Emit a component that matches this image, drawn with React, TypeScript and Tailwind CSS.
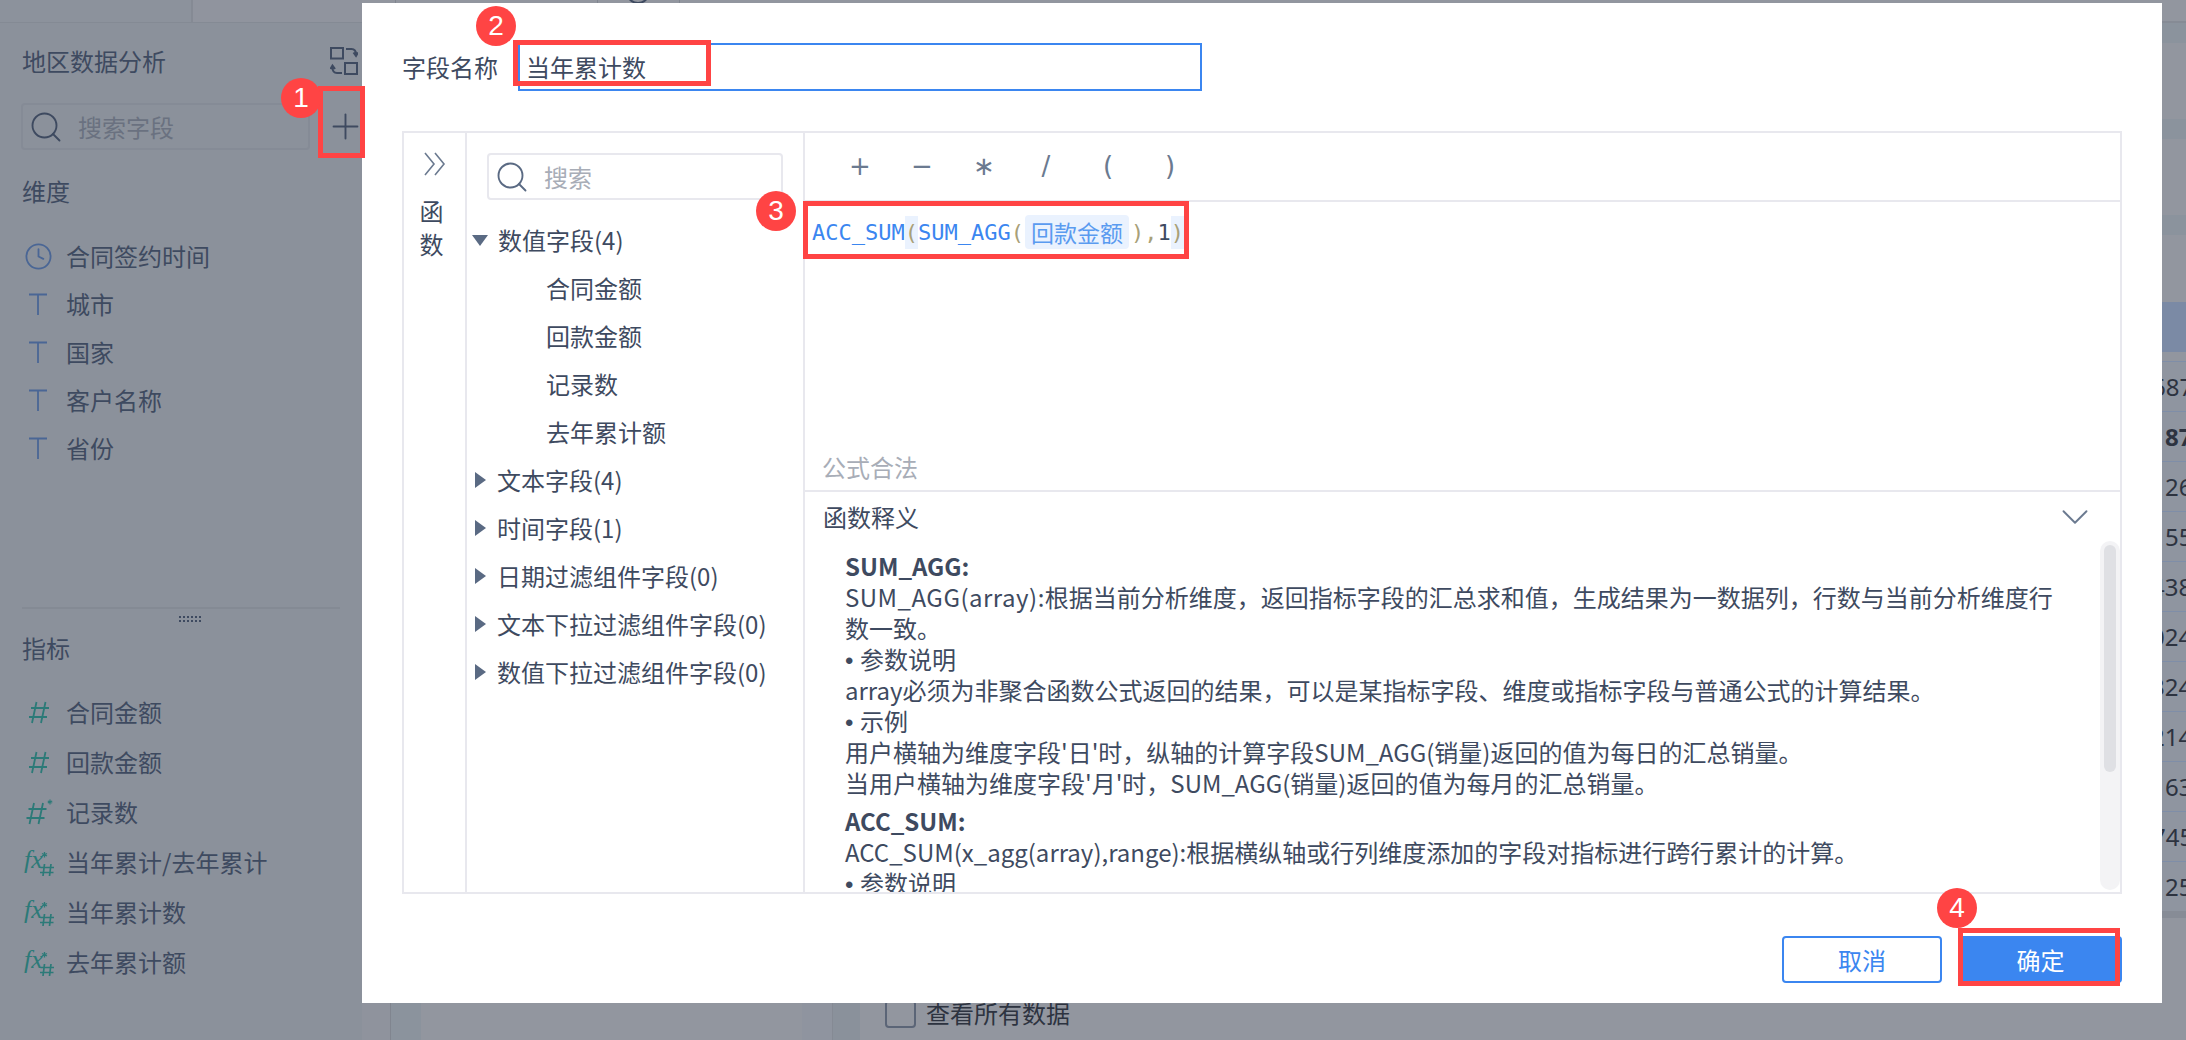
import React from "react";
import { Search, Plus, ChevronDown, Clock } from "lucide-react";

const T = () => (
  <svg width="24" height="24" viewBox="0 0 24 24" fill="none" stroke="#4a6695" strokeWidth="1.8">
    <path d="M3 2.5H21M12 2.5V23" />
  </svg>
);

const Hash = () => (
  <svg width="24" height="24" viewBox="0 0 24 24" fill="none" stroke="#2c7a78" strokeWidth="1.8">
    <path d="M9.5 2L5 23M18.5 2L14 23M4 8H22M2 17H20" />
  </svg>
);

const HashStar = () => (
  <svg width="30" height="26" viewBox="0 0 30 26" fill="none" stroke="#2c7a78" strokeWidth="1.8">
    <path d="M10 4L5.500 25M19 4L14.500 25M4.500 10H22.500M2.500 19H20.500" />
    <path d="M26 0.500V5.500M23.800 2L28.200 4M28.200 2L23.800 4" strokeWidth="1.200" />
  </svg>
);

const Fx = () => (
  <svg width="32" height="30" viewBox="0 0 32 30" fill="none" className="overflow-visible">
    <text x="1" y="21" fill="#2c7a78" fontSize="26" fontStyle="italic" fontFamily="Liberation Serif, serif">fx</text>
    <path d="M21.500 5V10.500M19 6.500L24 9M24 6.500L19 9" stroke="#2c7a78" strokeWidth="1.300" />
    <path d="M21.500 17L20 29M28 17L26.500 29M17.500 20.500H31M17 25.500H30.500" stroke="#2c7a78" strokeWidth="1.700" />
  </svg>
);

const SwapIcon = () => (
  <svg width="28" height="28" viewBox="0 0 28 28" fill="none" stroke="#3e4a60" strokeWidth="2">
    <rect x="1" y="1" width="12" height="10.500" />
    <rect x="15" y="16" width="12" height="11" />
    <path d="M16 2H21.500C24.500 2 26 4 26 7.500M23.500 5.500L26 9L28 5.500" />
    <path d="M12 26H7C4 26 2.500 24 2.500 20.500M0.500 22L2.500 18.500L5 22" />
  </svg>
);

const DoubleChevron = () => (
  <svg width="22" height="24" viewBox="0 0 22 24" fill="none" stroke="#6b7a90" strokeWidth="1.600">
    <path d="M1 1L10 12L1 23M11 1L20 12L11 23" />
  </svg>
);

const Badge = ({ n, className }: { n: string; className: string }) => (
  <div className={"absolute z-20 flex items-center justify-center rounded-full bg-[#ff4444] text-white font-['Liberation_Sans',sans-serif] text-[28px] leading-none " + className}>
    {n}
  </div>
);

const RedBox = ({ className }: { className: string }) => (
  <div className={"absolute z-10 border-[5px] border-[#ff4444] pointer-events-none " + className} />
);

const Bullet = ({ children }: { children: React.ReactNode }) => (
  <div className="h-[31px]">
    <span className="font-['Liberation_Sans',sans-serif] leading-none">• </span>
    <span className="leading-none">{children}</span>
  </div>
);

const dims = [
  { icon: <Clock size={29} color="#4a6695" strokeWidth={1.5} />, label: "合同签约时间" },
  { icon: <T />, label: "城市" },
  { icon: <T />, label: "国家" },
  { icon: <T />, label: "客户名称" },
  { icon: <T />, label: "省份" },
];

const metrics = [
  { icon: <Hash />, label: "合同金额" },
  { icon: <Hash />, label: "回款金额" },
  { icon: <HashStar />, label: "记录数" },
  { icon: <Fx />, label: "当年累计/去年累计" },
  { icon: <Fx />, label: "当年累计数" },
  { icon: <Fx />, label: "去年累计额" },
];

const LeftPanel = () => (
  <aside className="w-[362px] h-full shrink-0 bg-[#8b919b] text-[#3e4a60]">
    <div className="flex h-[23px] border-b border-[#848a94]">
      <div className="w-[193px] border-r-2 border-[#858a94] bg-[#8c929c]" />
      <div className="flex-1 bg-[#90949e]" />
    </div>
    <div className="mt-[21px] flex h-[34px] items-center justify-between pl-[22px] pr-[4px]">
      <span>地区数据分析</span>
      <SwapIcon />
    </div>
    <div className="mt-[25px] flex h-[47px] items-center pl-[21px]">
      <div className="flex h-full w-[289px] shrink-0 items-center rounded border-2 border-[#858b96] pl-[5px]">
        <Search size={36} color="#3e4a60" strokeWidth={1.25} />
        <span className="ml-[14px] text-[#6a7180]">搜索字段</span>
      </div>
      <Plus size={41} color="#3e4a60" strokeWidth={1.1} className="ml-[15px] shrink-0" />
    </div>
    <div className="mt-[24px] h-[34px] pl-[22px] leading-[34px]">维度</div>
    <div className="mt-[24px]">
      {dims.map((d) => (
        <div key={d.label} className="flex h-[48px] items-center">
          <div className="flex w-[76px] justify-center">{d.icon}</div>
          <span className="-ml-[10px]">{d.label}</span>
        </div>
      ))}
    </div>
    <div className="mx-[22px] mt-[135px] h-[2px] bg-[#848a94]" />
    <div className="mt-[7px] ml-[179px] grid w-[24px] grid-cols-6 gap-y-[2px]">
      {Array.from({ length: 12 }).map((_, i) => (
        <div key={i} className="h-[2px] w-[2px] bg-[#3e4a60]" />
      ))}
    </div>
    <div className="mt-[9px] h-[34px] pl-[22px] leading-[34px]">指标</div>
    <div className="mt-[22px]">
      {metrics.map((m) => (
        <div key={m.label} className="flex h-[50px] items-center">
          <div className="flex w-[66px] justify-start pl-[22px]">
            <div className="flex w-[34px] justify-center">{m.icon}</div>
          </div>
          <span>{m.label}</span>
        </div>
      ))}
    </div>
  </aside>
);

const rows = [
  { t: "687", c: "-ml-[10px]" },
  { t: "87", c: "font-bold ml-[3px]" },
  { t: "26", c: "ml-[3px]" },
  { t: "55", c: "ml-[3px]" },
  { t: "438", c: "-ml-[11px]" },
  { t: "024", c: "-ml-[11px]" },
  { t: "324", c: "-ml-[11px]" },
  { t: "214", c: "-ml-[11px]" },
  { t: "63", c: "ml-[3px]" },
  { t: "745", c: "-ml-[10px]" },
  { t: "25", c: "ml-[3px]" },
];

const RightStrip = () => (
  <div className="h-full w-[24px] shrink-0 overflow-hidden bg-[#92969f] text-[#2d3340] font-['Noto_Sans',sans-serif]">
    <div className="h-[23px] border-b-2 border-[#868b95]" />
    <div className="h-[20px] bg-[#8b939d]" />
    <div className="h-[76px]" />
    <div className="h-[20px] bg-[#8b939d]" />
    <div className="h-[76px]" />
    <div className="h-[20px] bg-[#8b939d]" />
    <div className="h-[67px]" />
    <div className="h-[50px] bg-[#7b8aa5]" />
    <div className="h-[9px]" />
    {rows.map((r, i) => (
      <div key={i} className="flex h-[50px] items-center overflow-hidden whitespace-nowrap border-t border-[#7f8ea8] bg-[#8f95a0]">
        <span className={r.c}>{r.t}</span>
      </div>
    ))}
    <div className="h-[7px] bg-[#878c96]" />
  </div>
);

const Middle = () => (
  <div className="flex h-full min-w-0 flex-1 flex-col justify-between bg-[#92969f]">
    <div className="flex h-[3px] overflow-hidden">
      <div className="w-[33px]" />
      <div className="w-[202px] border-l border-[#80858f]" />
      <div className="relative w-[82px] border-l border-[#80858f]">
        <div className="absolute -top-[20px] left-[28px] h-[24px] w-[24px] rounded-full border-2 border-[#3e4a60]" />
      </div>
      <div className="border-l border-[#80858f]" />
    </div>
    <div className="flex h-[37px]">
      <div className="w-[29px] border-r border-[#80858f] bg-[#8f939d]" />
      <div className="w-[30px] bg-[#8b939d]" />
      <div className="w-[381px] bg-[#92969f]" />
      <div className="w-[31px] border-r border-[#858a94] bg-[#8f949f]" />
      <div className="w-[27px] bg-[#8a919b]" />
      <div className="flex flex-1 items-start pl-[25px] text-[#2d3340]">
        <div className="-mt-[3px] h-[28px] w-[31px] rounded border-2 border-[#5b6577]" />
        <span className="ml-[10px] -mt-[7px] leading-[34px]">查看所有数据</span>
      </div>
    </div>
  </div>
);

const Caret = ({ open }: { open?: boolean }) =>
  open ? (
    <div className="ml-[5px] mr-[10px] h-0 w-0 border-x-[8px] border-t-[11px] border-x-transparent border-t-[#5a6a83]" />
  ) : (
    <div className="ml-[8px] mr-[11px] h-0 w-0 border-y-[8px] border-l-[11px] border-y-transparent border-l-[#5a6a83]" />
  );

const TreeRow = ({ label, open }: { label: string; open?: boolean }) => (
  <div className="flex h-[48px] items-center">
    <Caret open={open} />
    <span>{label}</span>
  </div>
);

const Leaf = ({ label }: { label: string }) => (
  <div className="flex h-[48px] items-center pl-[79px]">{label}</div>
);

const Desc = () => (
  <div className="relative min-h-0 flex-1 overflow-hidden">
    <div className="absolute right-0 top-[49px] h-[349px] w-[20px] rounded-full bg-[#f3f3f5] pt-[4px]">
      <div className="mx-auto h-[227px] w-[12px] rounded-full bg-[#dfe0e4]" />
    </div>
    <div className="flex h-[50px] items-center justify-between pl-[18px] pr-[22px]">
      <span>函数释义</span>
      <ChevronDown size={46} color="#6b7a90" strokeWidth={1} />
    </div>
    <div className="pl-[40px] pt-[8px] leading-[31px]">
      <div className="font-bold">SUM_AGG:</div>
      <div>
        <span className="tracking-[0.5px]">SUM_AGG(array):</span>根据当前分析维度，返回指标字段的汇总求和值，生成结果为一数据列，行数与当前分析维度行
      </div>
      <div>数一致。</div>
      <Bullet>参数说明</Bullet>
      <div>array必须为非聚合函数公式返回的结果，可以是某指标字段、维度或指标字段与普通公式的计算结果。</div>
      <Bullet>示例</Bullet>
      <div>用户横轴为维度字段'日'时，纵轴的计算字段SUM_AGG(销量)返回的值为每日的汇总销量。</div>
      <div>当用户横轴为维度字段'月'时，SUM_AGG(销量)返回的值为每月的汇总销量。</div>
      <div className="mt-[7px] font-bold">ACC_SUM:</div>
      <div>ACC_SUM(x_agg(array),range):根据横纵轴或行列维度添加的字段对指标进行跨行累计的计算。</div>
      <Bullet>参数说明</Bullet>
    </div>
  </div>
);

const Dialog = () => (
  <div className="absolute left-[362px] top-[3px] z-0 h-[1000px] w-[1800px] bg-white px-[40px] pt-[40px] text-[#3e4a60]">
    <div className="flex h-[48px] items-center">
      <span className="w-[116px]">字段名称</span>
      <div className="flex h-full w-[684px] items-center border-2 border-[#3b86f0] pl-[6px]">当年累计数</div>
    </div>
    <div className="mt-[40px] flex h-[763px] border-2 border-[#e8e8ee]">
      <div className="w-[63px] shrink-0 border-r-2 border-[#e8e8ee]">
        <div className="flex justify-center pl-[1px] pt-[19px]">
          <DoubleChevron />
        </div>
        <div className="-ml-[6px] mt-[18px] text-center leading-[33px]">
          <div>函</div>
          <div>数</div>
        </div>
      </div>
      <div className="w-[338px] shrink-0 border-r-2 border-[#e8e8ee]">
        <div className="ml-[20px] mt-[20px] flex h-[47px] w-[296px] items-center rounded border-2 border-[#e8e8ee] pl-[5px]">
          <Search size={36} color="#5a6a83" strokeWidth={1.25} />
          <span className="ml-[14px] text-[#a8adb7]">搜索</span>
        </div>
        <div className="mt-[16px]">
          <TreeRow open label="数值字段(4)" />
          <Leaf label="合同金额" />
          <Leaf label="回款金额" />
          <Leaf label="记录数" />
          <Leaf label="去年累计额" />
          <TreeRow label="文本字段(4)" />
          <TreeRow label="时间字段(1)" />
          <TreeRow label="日期过滤组件字段(0)" />
          <TreeRow label="文本下拉过滤组件字段(0)" />
          <TreeRow label="数值下拉过滤组件字段(0)" />
        </div>
      </div>
      <div className="flex min-w-0 flex-1 flex-col">
        <div className="flex h-[69px] shrink-0 items-center border-b-2 border-[#e8e8ee] pl-[24px] text-[#6b7a90]">
          {["+", "−", "∗", "/", "(", ")"].map((c) => (
            <span key={c} className="w-[62px] text-center font-['DejaVu_Sans',sans-serif] text-[26px]">{c}</span>
          ))}
        </div>
        <div className="flex h-[290px] shrink-0 flex-col justify-between border-b-2 border-[#e8e8ee]">
          <div className="mt-[14px] flex h-[32px] items-center whitespace-pre pl-[7px] font-['DejaVu_Sans_Mono','Noto_Sans_CJK_SC',monospace] text-[22px] text-[#3b86f0]">
            <span>ACC_SUM</span>
            <span className="bg-[#eaf2fe] text-[#a8a078]">(</span>
            <span>SUM_AGG</span>
            <span className="text-[#a8a078]">(</span>
            <span className="ml-[1px] rounded bg-[#eaf2fe] px-[6px] font-['Noto_Sans_CJK_SC',sans-serif] text-[23px] text-[#5a9bf0]">回款金额</span>
            <span className="ml-[2px] text-[#a8a078]">),</span>
            <span className="text-[#3e4a60]">1</span>
            <span className="border-r-2 border-[#2d3340] bg-[#eaf2fe] text-[#a8a078]">)</span>
          </div>
          <div className="mb-[7px] h-[32px] pl-[17px] leading-[32px] text-[#a8adb7]">公式合法</div>
        </div>
        <Desc />
      </div>
    </div>
    <div className="mt-[42px] flex justify-end gap-[17px]">
      <button className="h-[47px] w-[160px] rounded border-2 border-[#3b86f0] text-[#3b86f0]">取消</button>
      <button className="h-[47px] w-[163px] rounded bg-[#3b86f0] text-white">确定</button>
    </div>
  </div>
);

export default function App() {
  return (
    <div className="relative flex h-[1040px] w-[2186px] overflow-hidden font-['Noto_Sans_CJK_SC','Noto_Sans',sans-serif] text-[24px]">
      <LeftPanel />
      <Middle />
      <RightStrip />
      <Dialog />
      <RedBox className="left-[318px] top-[86px] h-[72px] w-[47px]" />
      <Badge n="1" className="left-[281px] top-[78px] h-[40px] w-[40px]" />
      <RedBox className="left-[513px] top-[40px] h-[46px] w-[198px]" />
      <Badge n="2" className="left-[476px] top-[6px] h-[40px] w-[40px]" />
      <RedBox className="left-[803px] top-[201px] h-[58px] w-[386px]" />
      <Badge n="3" className="left-[756px] top-[191px] h-[40px] w-[40px]" />
      <RedBox className="left-[1958px] top-[928px] h-[58px] w-[162px]" />
      <Badge n="4" className="left-[1937px] top-[888px] h-[40px] w-[40px]" />
    </div>
  );
}
